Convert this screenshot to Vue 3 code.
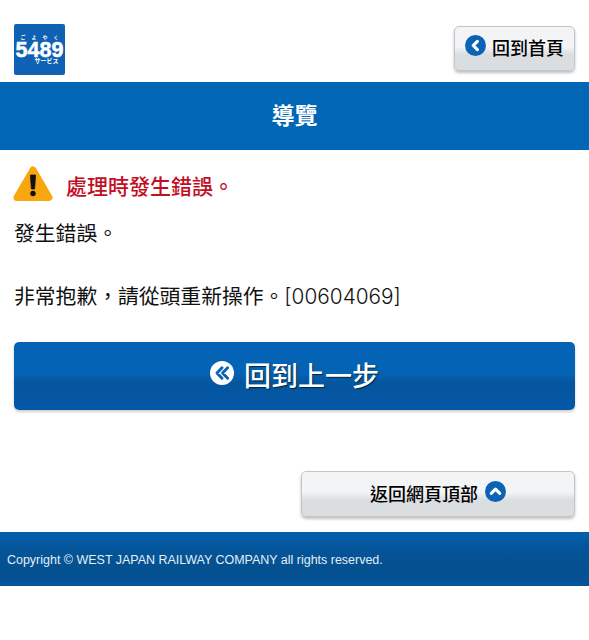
<template>
  <div class="page">
    <header class="header">
      <div class="logo">
        <span class="logo-ruby">ごよやく</span>
        <span class="logo-num">5489</span>
        <span class="logo-sub">サービス</span>
      </div>
      <a class="btn-gray btn-home">
        <svg class="icon-circle" viewBox="0 0 20 20">
          <circle cx="10" cy="10" r="10" fill="#0a63b4" />
          <path d="M11.8 6 7.8 10l4 4" fill="none" stroke="#fff" stroke-width="3" stroke-linecap="round" stroke-linejoin="round" />
        </svg>
        <span>回到首頁</span>
      </a>
    </header>

    <h1 class="title">導覽</h1>

    <section class="content">
      <div class="error-head">
        <svg class="icon-warn" viewBox="0 0 40 36">
          <path d="M20 4.5 36 32H4Z" fill="#f9a60f" stroke="#f9a60f" stroke-width="7" stroke-linejoin="round" />
          <path d="M17.4 9.5h5.2l-1 14h-3.2Z" fill="#111" stroke="#111" stroke-width=".8" stroke-linejoin="round" />
          <circle cx="20" cy="28" r="2.7" fill="#111" />
        </svg>
        <span class="error-title">處理時發生錯誤。</span>
      </div>
      <p class="msg msg-first">發生錯誤。</p>
      <p class="msg msg-second">非常抱歉，請從頭重新操作。<span class="code">[00604069]</span></p>

      <a class="btn-back">
        <svg class="icon-back" viewBox="0 0 24 24">
          <circle cx="12" cy="12" r="12" fill="#fff" />
          <path d="M12 6.8 7 12l5 5.2M17.6 6.8l-5 5.2 5 5.2" fill="none" stroke="#0a63b4" stroke-width="3" stroke-linecap="round" stroke-linejoin="round" />
        </svg>
        <span>回到上一步</span>
      </a>

      <div class="to-top-row">
        <a class="btn-gray btn-top">
          <span>返回網頁頂部</span>
          <svg class="icon-circle" viewBox="0 0 20 20">
            <circle cx="10" cy="10" r="10" fill="#0a63b4" />
            <path d="M6 11.8 10 7.8l4 4" fill="none" stroke="#fff" stroke-width="3" stroke-linecap="round" stroke-linejoin="round" />
          </svg>
        </a>
      </div>
    </section>

    <footer class="footer">Copyright © WEST JAPAN RAILWAY COMPANY all rights reserved.</footer>
  </div>
</template>

<script setup>
</script>

<style>
html,
body {
  background: #fff;
}
</style>

<style scoped>
.page {
  width: 589px;
  height: 640px;
  background: #fff;
  overflow: hidden;
  font-family: "Liberation Sans", "Noto Sans CJK TC", sans-serif;
  color: #111;
}

.header {
  height: 82px;
  padding: 24px 14px 0;
  box-sizing: border-box;
  display: flex;
  justify-content: space-between;
  align-items: flex-start;
}

.logo {
  width: 51px;
  height: 51px;
  background: #0f62b3;
  border-radius: 2px;
  color: #fff;
  display: flex;
  flex-direction: column;
  align-items: center;
  overflow: hidden;
}

.logo-ruby {
  font-size: 5px;
  line-height: 6px;
  letter-spacing: 6px;
  margin: 10px 0 0 6px;
  font-weight: 700;
  white-space: nowrap;
}

.logo-num {
  font-size: 21.5px;
  line-height: 16px;
  margin-top: 2px;
  font-weight: 700;
  -webkit-text-stroke: 0.5px #fff;
}

.logo-sub {
  font-size: 6px;
  line-height: 7px;
  font-weight: 700;
  margin-left: 14px;
}

.btn-gray {
  box-sizing: border-box;
  display: flex;
  align-items: center;
  justify-content: center;
  border: 1px solid #c3c6c9;
  border-radius: 5px;
  background: linear-gradient(#f2f4f6 0 46%, #dadee1 64% 100%);
  box-shadow: 0 2px 3px rgba(0, 0, 0, 0.25);
  font-weight: 500;
  color: #000;
}

.btn-home {
  width: 121px;
  height: 45px;
  margin-top: 2px;
  gap: 6px;
  font-size: 18px;
}

.btn-home span {
  margin-top: -4px;
}

.btn-home .icon-circle {
  margin-top: -7px;
}

.btn-top {
  width: 274px;
  height: 46px;
  gap: 7px;
  font-size: 18px;
}

.btn-top span {
  margin-top: -2px;
}

.btn-top .icon-circle {
  margin-top: -6px;
}

.icon-circle {
  width: 21px;
  height: 21px;
  flex: none;
}

.title {
  margin: 0;
  height: 68px;
  background: #0066b5;
  color: #fff;
  font-size: 23px;
  font-weight: 700;
  line-height: 69px;
  text-align: center;
}

.content {
  padding: 0 14px;
}

.error-head {
  display: flex;
  align-items: center;
  gap: 13px;
  margin: 15px 0 0 -1px;
  height: 37px;
}

.icon-warn {
  width: 40px;
  height: 37px;
  flex: none;
}

.error-title {
  font-size: 21px;
  font-weight: 500;
  color: #c30d23;
  line-height: 1;
  margin-top: 6px;
}

.msg {
  margin: 0;
  font-size: 20.8px;
  line-height: 30px;
}

.msg-first {
  margin-top: 17px;
}

.msg-second {
  margin-top: 33px;
}

.code {
  font-family: Inter, "Liberation Sans", sans-serif;
  font-weight: 300;
}

.btn-back {
  margin-top: 30px;
  height: 68px;
  display: flex;
  align-items: center;
  justify-content: center;
  gap: 10px;
  border-radius: 5px;
  background: linear-gradient(#0563b5 0 46%, #05559f 60%, #0458a6 100%);
  box-shadow: 0 2px 3px rgba(0, 0, 0, 0.2);
  color: #fff;
  font-size: 27px;
  font-weight: 500;
  text-shadow: 1px 1px 1px rgba(0, 0, 0, 0.6);
}

.btn-back span {
  margin-top: -4px;
}

.icon-back {
  width: 24px;
  height: 24px;
  flex: none;
  margin-top: -6px;
}

.to-top-row {
  display: flex;
  justify-content: flex-end;
  margin-top: 61px;
}

.footer {
  margin-top: 15px;
  height: 54px;
  padding-left: 7px;
  background: linear-gradient(#0461ad, #04559a 30%, #04508f 70%, #04559a);
  color: #e4eef6;
  font-size: 12.47px;
  line-height: 56px;
}
</style>
